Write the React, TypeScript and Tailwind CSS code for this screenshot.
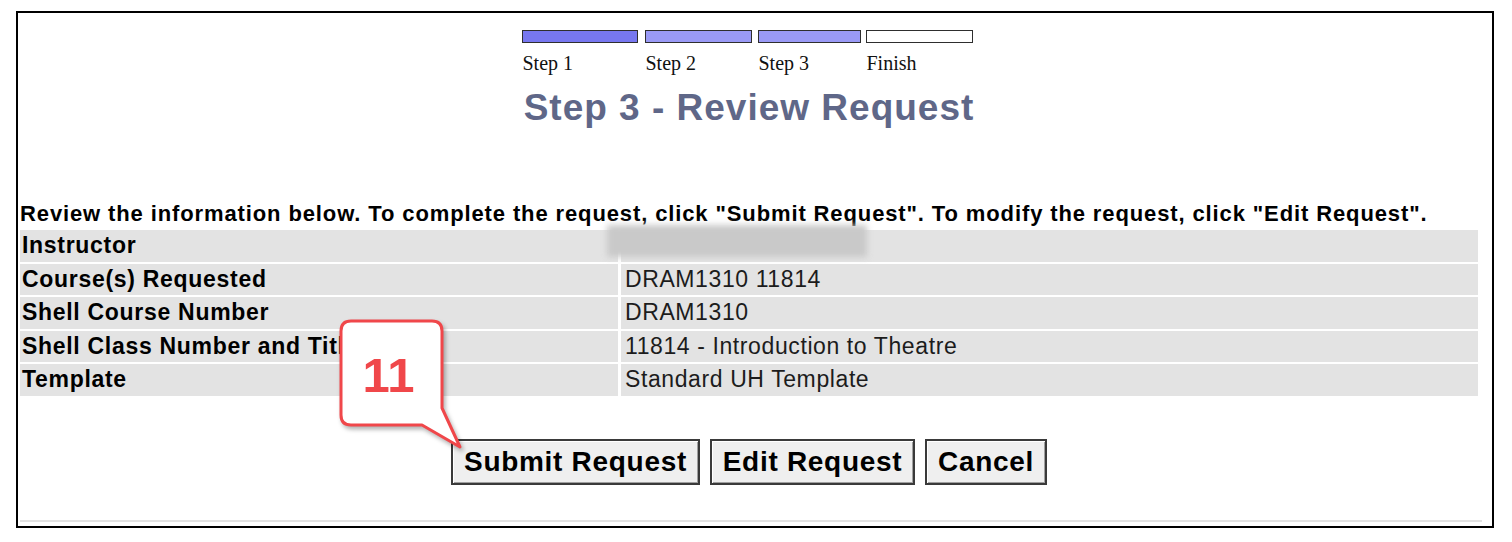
import React from "react";

const rows: [string, string][] = [
  ["Instructor", ""],
  ["Course(s) Requested", "DRAM1310 11814"],
  ["Shell Course Number", "DRAM1310"],
  ["Shell Class Number and Title", "11814 - Introduction to Theatre"],
  ["Template", "Standard UH Template"],
];

const steps = [
  { label: "Step 1", w: "w-[116px]", fill: "bg-[#7777f0]", gap: "mr-[7px]" },
  { label: "Step 2", w: "w-[107px]", fill: "bg-[#9a9af6]", gap: "mr-[6px]" },
  { label: "Step 3", w: "w-[103px]", fill: "bg-[#9a9af6]", gap: "mr-[5px]" },
  { label: "Finish", w: "w-[107px]", fill: "bg-white", gap: "" },
];

export default function App() {
  return (
    <div className="relative w-[1512px] h-[542px] bg-white overflow-hidden font-['Liberation_Sans',Arial,sans-serif]">
      <div className="ml-[16px] mt-[11px] w-[1478px] h-[517px] border-2 border-black">
        <div className="ml-[2px] w-[1458px] flex flex-col items-center">
          {/* progress */}
          <div className="mt-[17px] flex mr-[4px]">
            {steps.map((s) => (
              <div key={s.label} className={`${s.w} ${s.gap} flex flex-col`}>
                <div className={`h-[13px] border-[1.5px] border-[#2e2e2e] ${s.fill}`} />
                <div className="mt-[8px] pl-[1px] text-[20px] leading-[24px] text-[#111] font-['Liberation_Serif','Times_New_Roman',serif]">
                  {s.label}
                </div>
              </div>
            ))}
          </div>
          <h1 className="mt-[12px] text-[37px] leading-[42px] tracking-[1px] font-bold text-[#5f6788]">
            Step 3 - Review Request
          </h1>
        </div>
        <div className="ml-[2px] w-[1458px] mt-[73px]">
          <div className="text-[22px] leading-[24px] tracking-[0.88px] font-bold text-black whitespace-nowrap">
            Review the information below. To complete the request, click "Submit Request". To modify the request, click "Edit Request".
          </div>
          <div className="mt-[4px] flex flex-col gap-[2px]">
            {rows.map(([k, v]) => (
              <div key={k} className="flex gap-[3px] h-[31.5px]">
                <div className="w-[598px] bg-[#e3e3e3] pl-[2px] text-[23px] leading-[31px] tracking-[0.7px] font-bold text-black whitespace-nowrap">
                  {k}
                </div>
                <div className="relative flex-1 bg-[#e3e3e3] pl-[4px] text-[23px] leading-[31px] tracking-[0.6px] text-[#1c1c1c] whitespace-nowrap">
                  {v}
                  {k === "Instructor" && (
                    <div className="absolute left-[-14px] top-[-5px] w-[260px] h-[32px] bg-[#c9c9c9] blur-[3px]" />
                  )}
                </div>
              </div>
            ))}
          </div>
          <div className="mt-[43px] flex justify-center gap-[10px]">
            {[
              ["Submit Request", "w-[249px]"],
              ["Edit Request", "w-[205px]"],
              ["Cancel", "w-[122px]"],
            ].map(([t, w]) => (
              <div
                key={t}
                className={`${w} h-[46px] border-2 border-[#3a3a3a] bg-[#efefef] shadow-[inset_1px_1px_0_#ffffff,inset_-1px_-1px_0_#a0a0a0] flex items-center justify-center text-[28px] tracking-[0.7px] font-bold text-black`}
              >
                {t}
              </div>
            ))}
          </div>
          <div className="mt-[35px] h-[2px] w-[1462px] bg-[#e2e2e2]" />
        </div>
      </div>

      {/* callout */}
      <svg
        className="absolute left-[330px] top-[310px] drop-shadow-[2px_3px_2px_rgba(0,0,0,0.3)]"
        width="140"
        height="150"
        viewBox="330 310 140 150"
      >
        <path
          d="M 351 321 H 432 Q 442 321 442 331 V 408 L 460 447 L 422 425 H 351 Q 341 425 341 415 V 331 Q 341 321 351 321 Z"
          fill="#ffffff"
          stroke="#f0474a"
          strokeWidth="3"
          strokeLinejoin="round"
        />
      </svg>
      <div className="absolute left-[338px] top-[351px] w-[101px] text-center text-[49px] leading-[49px] font-bold text-[#f0474a]">
        11
      </div>
    </div>
  );
}
